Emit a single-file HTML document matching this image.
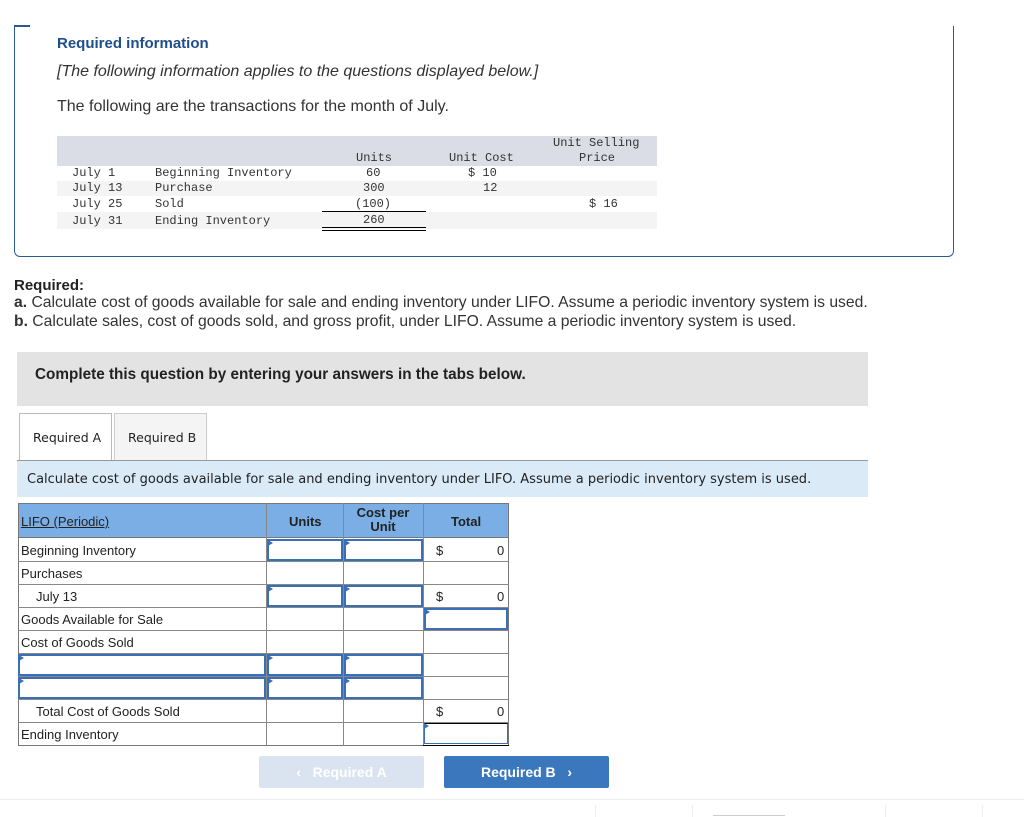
<!DOCTYPE html>
<html><head><style>
*{margin:0;padding:0;box-sizing:border-box}
body{width:1024px;height:817px;background:#fff;position:relative;overflow:hidden;font-family:"Liberation Sans",sans-serif;color:#222}
.a{position:absolute}
.m{font-family:"Liberation Mono",monospace;font-size:12px;color:#333;position:absolute;white-space:nowrap}
.t{position:absolute;font-size:15.7px;white-space:nowrap}
.d{font-family:"DejaVu Sans",sans-serif}
.in{position:absolute;border:2px solid #3a6fb5;background:#fff}
.in:before{content:"";position:absolute;left:-1px;top:-1px;border-left:5px solid #3a6fb5;border-top:3px solid transparent;border-bottom:3px solid transparent}
.tx{position:absolute;font-size:13px;color:#222;white-space:nowrap}
</style></head><body>
<div class="a" style="left:14px;top:26px;width:940px;height:231px;border:1px solid #2a5a90;border-top:none;border-radius:0 0 6px 6px"></div>
<div class="a" style="left:14px;top:25px;width:16px;height:2px;background:#2a5a90"></div>
<div class="t" style="left:57px;top:35px;font-size:15px;font-weight:bold;color:#1f4e8c">Required information</div>
<div class="t" style="left:57px;top:63px;font-size:16px;font-style:italic;color:#333">[The following information applies to the questions displayed below.]</div>
<div class="t" style="left:57px;top:98px;font-size:16px;color:#333">The following are the transactions for the month of July.</div>
<div class="a" style="left:57px;top:136px;width:600px;height:30px;background:#dadde6"></div>
<div class="a" style="left:57px;top:181px;width:600px;height:15px;background:#f4f4f4"></div>
<div class="a" style="left:57px;top:212px;width:600px;height:17px;background:#f4f4f4"></div>
<div class="m" style="left:356px;top:151px">Units</div>
<div class="m" style="left:449px;top:151px">Unit Cost</div>
<div class="m" style="left:553px;top:136px">Unit Selling</div>
<div class="m" style="left:579px;top:151px">Price</div>
<div class="m" style="left:72px;top:166px">July 1</div><div class="m" style="left:155px;top:166px">Beginning Inventory</div><div class="m" style="left:366px;top:166px">60</div><div class="m" style="left:468px;top:166px">$ 10</div>
<div class="m" style="left:72px;top:181px">July 13</div><div class="m" style="left:155px;top:181px">Purchase</div><div class="m" style="left:363px;top:181px">300</div><div class="m" style="left:483px;top:181px">12</div>
<div class="m" style="left:72px;top:197px">July 25</div><div class="m" style="left:155px;top:197px">Sold</div><div class="m" style="left:355px;top:197px">(100)</div><div class="m" style="left:589px;top:197px">$ 16</div>
<div class="m" style="left:72px;top:214px">July 31</div><div class="m" style="left:155px;top:214px">Ending Inventory</div><div class="m" style="left:363px;top:213px">260</div>
<div class="a" style="left:322px;top:211px;width:104px;height:1px;background:#000"></div>
<div class="a" style="left:322px;top:227px;width:104px;height:4px;border-top:1px solid #000;border-bottom:1px solid #000"></div>
<div class="t" style="left:14px;top:277px;font-weight:bold;font-size:15px">Required:</div>
<div class="t" style="left:14px;top:294px;color:#333"><b>a.</b> Calculate cost of goods available for sale and ending inventory under LIFO. Assume a periodic inventory system is used.</div>
<div class="t" style="left:14px;top:313px;color:#333"><b>b.</b> Calculate sales, cost of goods sold, and gross profit, under LIFO. Assume a periodic inventory system is used.</div>
<div class="a" style="left:17px;top:352px;width:851px;height:54px;background:#e3e3e3"></div>
<div class="t" style="left:35px;top:366px;font-weight:bold;font-size:15.3px;color:#222">Complete this question by entering your answers in the tabs below.</div>
<div class="a" style="left:19px;top:413px;width:93px;height:48px;border:1px solid #bbb;border-bottom:none;background:#fff"></div>
<div class="a" style="left:114px;top:413px;width:93px;height:47px;border:1px solid #ccc;border-bottom:none;background:#f4f4f4"></div>
<div class="tx d" style="left:33px;top:430px;font-size:12.5px">Required A</div>
<div class="tx d" style="left:128px;top:430px;font-size:12.5px">Required B</div>
<div class="a" style="left:17px;top:460px;width:851px;height:37px;background:#dbeaf7;border-top:1px solid #999"></div>
<div class="tx d" style="left:27px;top:472px">Calculate cost of goods available for sale and ending inventory under LIFO. Assume a periodic inventory system is used.</div>
<div class="a" style="left:18px;top:503px;width:491px;height:243px;border:1px solid #777"></div>
<div class="a" style="left:18px;top:503px;width:491px;height:35px;background:#7aaee5;border:1px solid #777"></div>
<div class="a" style="left:266px;top:503px;width:1px;height:243px;background:#888"></div>
<div class="a" style="left:343px;top:503px;width:1px;height:243px;background:#888"></div>
<div class="a" style="left:423px;top:503px;width:1px;height:243px;background:#888"></div>
<div class="a" style="left:18px;top:561px;width:491px;height:1px;background:#888"></div>
<div class="a" style="left:18px;top:584px;width:491px;height:1px;background:#888"></div>
<div class="a" style="left:18px;top:607px;width:491px;height:1px;background:#888"></div>
<div class="a" style="left:18px;top:630px;width:491px;height:1px;background:#888"></div>
<div class="a" style="left:18px;top:653px;width:491px;height:1px;background:#888"></div>
<div class="a" style="left:18px;top:676px;width:491px;height:1px;background:#888"></div>
<div class="a" style="left:18px;top:699px;width:491px;height:1px;background:#888"></div>
<div class="a" style="left:18px;top:722px;width:491px;height:1px;background:#888"></div>
<div class="tx" style="left:21px;top:514px;text-decoration:underline;font-size:13px">LIFO (Periodic)</div>
<div class="tx" style="left:289px;top:514px;font-weight:bold">Units</div>
<div class="tx" style="left:355px;top:506px;font-weight:bold;text-align:center;width:56px;line-height:14px;white-space:normal">Cost per Unit</div>
<div class="tx" style="left:451px;top:514px;font-weight:bold">Total</div>
<div class="tx" style="left:21px;top:543px">Beginning Inventory</div>
<div class="tx" style="left:21px;top:566px">Purchases</div>
<div class="tx" style="left:36px;top:589px">July 13</div>
<div class="tx" style="left:21px;top:612px">Goods Available for Sale</div>
<div class="tx" style="left:21px;top:635px">Cost of Goods Sold</div>
<div class="tx" style="left:36px;top:704px">Total Cost of Goods Sold</div>
<div class="tx" style="left:21px;top:727px">Ending Inventory</div>
<div class="in" style="left:267px;top:539px;width:76px;height:22px"></div>
<div class="in" style="left:344px;top:539px;width:79px;height:22px"></div>
<div class="in" style="left:267px;top:585px;width:76px;height:22px"></div>
<div class="in" style="left:344px;top:585px;width:79px;height:22px"></div>
<div class="in" style="left:424px;top:608px;width:84px;height:22px"></div>
<div class="in" style="left:18px;top:654px;width:248px;height:22px"></div>
<div class="in" style="left:267px;top:654px;width:76px;height:22px"></div>
<div class="in" style="left:344px;top:654px;width:79px;height:22px"></div>
<div class="in" style="left:18px;top:677px;width:248px;height:22px"></div>
<div class="in" style="left:267px;top:677px;width:76px;height:22px"></div>
<div class="in" style="left:344px;top:677px;width:79px;height:22px"></div>
<div class="in" style="left:424px;top:723px;width:84px;height:21px;border-width:1px 1px 1px 1px;border-color:#000 #3a6fb5 #3a6fb5 #3a6fb5"></div>
<div class="a" style="left:423px;top:745px;width:86px;height:1px;background:#000"></div>
<div class="tx" style="left:436px;top:543px">$</div><div class="tx" style="left:497px;top:543px">0</div>
<div class="tx" style="left:436px;top:589px">$</div><div class="tx" style="left:497px;top:589px">0</div>
<div class="tx" style="left:436px;top:704px">$</div><div class="tx" style="left:497px;top:704px">0</div>
<div class="a" style="left:259px;top:756px;width:165px;height:32px;background:#dae3f0;border-radius:2px;color:#fff;font-weight:bold;font-size:14px;line-height:32px;text-align:center">&lsaquo;&nbsp;&nbsp;&nbsp;Required A</div>
<div class="a" style="left:444px;top:756px;width:165px;height:32px;background:#3a77bc;border-radius:2px;color:#fff;font-weight:bold;font-size:14px;line-height:32px;text-align:center">Required B&nbsp;&nbsp;&nbsp;&rsaquo;</div>
<div class="a" style="left:0;top:799px;width:1024px;height:1px;background:#eee"></div>
<div class="a" style="left:595px;top:805px;width:1px;height:12px;background:#eee"></div>
<div class="a" style="left:692px;top:805px;width:1px;height:12px;background:#eee"></div>
<div class="a" style="left:885px;top:805px;width:1px;height:12px;background:#eee"></div>
<div class="a" style="left:982px;top:805px;width:1px;height:12px;background:#eee"></div>
<div class="a" style="left:713px;top:815px;width:72px;height:2px;border-top:1px solid #ccc"></div>
</body></html>
